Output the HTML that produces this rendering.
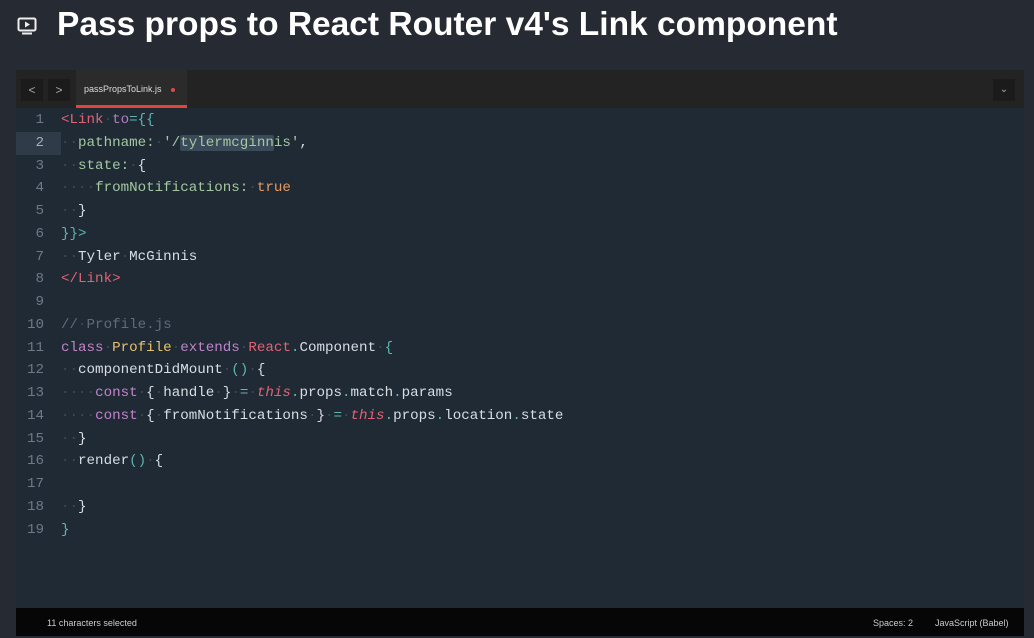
<!DOCTYPE html>
<html><head><meta charset="utf-8"><style>
body{margin:0;width:1034px;height:638px;background:#262a33;overflow:hidden;font-family:"Liberation Sans",sans-serif}
.title{position:absolute;left:57px;top:6px;color:#fff;font-weight:bold;font-size:33.5px;letter-spacing:0}
.ed{position:absolute;left:16px;top:70px;width:1008px;height:566px;background:#1f2a35}
.tabs{position:absolute;left:0;top:0;width:1008px;height:38px;background:#232323}
.nb{position:absolute;top:9px;width:22px;height:22px;background:#1b1b1b;color:#aaa;font-size:12px;text-align:center;line-height:22px}
.tab{position:absolute;left:60px;top:0;width:111px;height:38px;background:#2b2b2b;color:#ddd;font-size:9px}
.tab span{position:absolute;left:8px;top:14px}
.tab i{position:absolute;left:95px;top:18px;width:4px;height:4px;border-radius:2px;background:#e04848}
.tab b{position:absolute;left:0;bottom:0;width:111px;height:3px;background:#e0453c}
.code{position:absolute;left:0;top:39px;width:1008px;font-family:"Liberation Mono",monospace;font-size:14.2px;color:#d7dde3}
.l{height:22.75px;line-height:22.75px;position:relative;white-space:pre}
.n{display:inline-block;width:28px;text-align:right;color:#6d7a86;padding-right:17px}
.hl .n{background:#2f3b48;color:#aab}
.d{color:#3d4a56}
.t{color:#e06374}.a{color:#b57cc2}.p{color:#5fb5b0}.s{color:#a4c8a0}.k{color:#c183c9}.y{color:#e7c26c}.o{color:#e59a63}.c{color:#5e6b78}.th{color:#e06374;font-style:italic}
.sel{background:#3a4a58;border-radius:2px}
.st{position:absolute;left:0;bottom:0;width:1008px;height:28px;background:#060606;color:#ccc;font-size:9px}
</style></head><body>
<svg style="position:absolute;left:17px;top:17px" width="20" height="18" viewBox="0 0 20 18"><rect x="1.5" y="1.5" width="17" height="12" rx="1.5" fill="none" stroke="#eee" stroke-width="2"/><path d="M8 4.5v6l5-3z" fill="#eee"/><path d="M5 16.5h10" stroke="#eee" stroke-width="2"/></svg>
<div class="title">Pass props to React Router v4's Link component</div>
<div class="ed">
<div class="tabs">
<div class="nb" style="left:5px">&lt;</div><div class="nb" style="left:32px">&gt;</div>
<div class="tab"><span>passPropsToLink.js</span><i></i><b></b></div>
<div class="nb" style="left:977px;width:22px;font-size:10px">⌄</div>
</div>
<div class="code">
<div class="l"><span class="n">1</span><span class="t">&lt;Link</span><span class="d">·</span><span class="a">to</span><span class="p">={{</span></div>
<div class="l hl"><span class="n">2</span><span class="d">··</span><span class="s">pathname:</span><span class="d">·</span><span class="s">'/<span class="sel">tylermcginn</span>is'</span>,</div>
<div class="l"><span class="n">3</span><span class="d">··</span><span class="s">state:</span><span class="d">·</span>{</div>
<div class="l"><span class="n">4</span><span class="d">····</span><span class="s">fromNotifications:</span><span class="d">·</span><span class="o">true</span></div>
<div class="l"><span class="n">5</span><span class="d">··</span>}</div>
<div class="l"><span class="n">6</span><span class="p">}}&gt;</span></div>
<div class="l"><span class="n">7</span><span class="d">··</span>Tyler<span class="d">·</span>McGinnis</div>
<div class="l"><span class="n">8</span><span class="t">&lt;/Link&gt;</span></div>
<div class="l"><span class="n">9</span></div>
<div class="l"><span class="n">10</span><span class="c">//<span class="d">·</span>Profile.js</span></div>
<div class="l"><span class="n">11</span><span class="k">class</span><span class="d">·</span><span class="y">Profile</span><span class="d">·</span><span class="k">extends</span><span class="d">·</span><span class="t">React</span><span class="p">.</span>Component<span class="d">·</span><span class="p">{</span></div>
<div class="l"><span class="n">12</span><span class="d">··</span>componentDidMount<span class="d">·</span><span class="p">()</span><span class="d">·</span>{</div>
<div class="l"><span class="n">13</span><span class="d">····</span><span class="k">const</span><span class="d">·</span>{<span class="d">·</span>handle<span class="d">·</span>}<span class="d">·</span><span class="p">=</span><span class="d">·</span><span class="th">this</span><span class="p">.</span>props<span class="p">.</span>match<span class="p">.</span>params</div>
<div class="l"><span class="n">14</span><span class="d">····</span><span class="k">const</span><span class="d">·</span>{<span class="d">·</span>fromNotifications<span class="d">·</span>}<span class="d">·</span><span class="p">=</span><span class="d">·</span><span class="th">this</span><span class="p">.</span>props<span class="p">.</span>location<span class="p">.</span>state</div>
<div class="l"><span class="n">15</span><span class="d">··</span>}</div>
<div class="l"><span class="n">16</span><span class="d">··</span>render<span class="p">()</span><span class="d">·</span>{</div>
<div class="l"><span class="n">17</span></div>
<div class="l"><span class="n">18</span><span class="d">··</span>}</div>
<div class="l"><span class="n">19</span><span class="p">}</span></div>
</div>
<div class="st"><span style="position:absolute;left:31px;top:10px">11 characters selected</span><span style="position:absolute;left:857px;top:10px">Spaces: 2</span><span style="position:absolute;left:919px;top:10px">JavaScript (Babel)</span></div>
</div>
</body></html>
